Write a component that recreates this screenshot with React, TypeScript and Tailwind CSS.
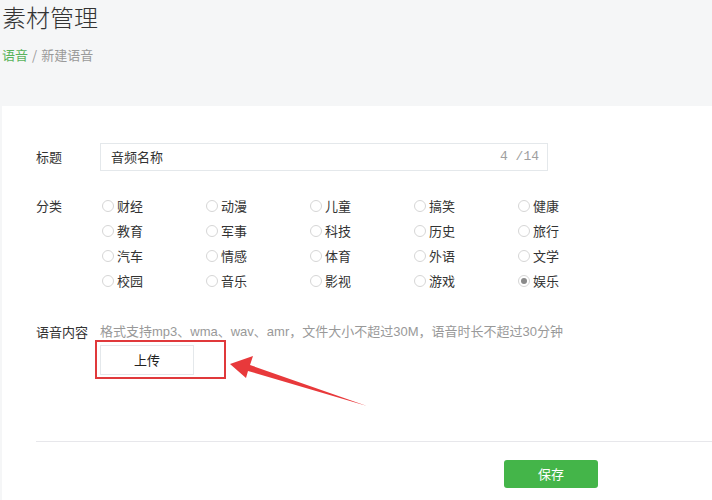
import React from "react";

const cats = [
  "财经", "动漫", "儿童", "搞笑", "健康",
  "教育", "军事", "科技", "历史", "旅行",
  "汽车", "情感", "体育", "外语", "文学",
  "校园", "音乐", "影视", "游戏", "娱乐",
];

export default function App() {
  return (
    <div
      className="relative w-[712px] h-[500px] overflow-hidden bg-[#f5f6f7] flex flex-col"
      style={{ fontFamily: '"Noto Sans CJK SC", "Liberation Sans", sans-serif' }}
    >
      <div className="pl-[2px] pt-[1px] h-[106px] shrink-0">
        <div className="text-[24px] leading-[32px] text-[#333] font-light">素材管理</div>
        <div className="mt-[12px] text-[13px] leading-[20px] text-[#9a9a9a]">
          <span className="text-[#59b35c]">语音</span>
          <span className="mx-[4px]">/</span>
          <span>新建语音</span>
        </div>
      </div>

      <div className="ml-[2px] flex-1 bg-white flex flex-col text-[13px] text-[#333]">
        <div className="pl-[34px] pt-[37px] flex items-center">
          <div className="w-[64px] leading-[28px]">标题</div>
          <div className="w-[448px] h-[28px] border border-[#e4e8eb] flex items-center justify-between pl-[10px] pr-[8px]">
            <span>音频名称</span>
            <span className="text-[#a0a0a0] text-[13px]" style={{ fontFamily: '"Liberation Mono", monospace' }}>4 /14</span>
          </div>
        </div>

        <div className="pl-[34px] mt-[22px] flex">
          <div className="w-[64px] leading-[25px]">分类</div>
          <div className="grid grid-cols-[104px_104px_104px_104px_104px]">
            {cats.map((c) => {
              const sel = c === "娱乐";
              return (
                <div key={c} className="h-[25px] flex items-center pl-[2px]">
                  <span className="w-[12px] h-[12px] rounded-full border border-[#d6d6d6] flex items-center justify-center mr-[3px]">
                    {sel && <span className="w-[6px] h-[6px] rounded-full bg-[#8a8a8a]" />}
                  </span>
                  <span>{c}</span>
                </div>
              );
            })}
          </div>
        </div>

        <div className="pl-[34px] mt-[27px] flex">
          <div className="w-[64px] leading-[24px]">语音内容</div>
          <div
            className="text-[#999] leading-[24px]"
            style={{ fontFamily: '"Liberation Sans", "Noto Sans CJK SC", sans-serif' }}
          >
            格式支持mp3、wma、wav、amr，文件大小不超过30M，语音时长不超过30分钟
          </div>
        </div>

        <div className="pl-[93px] mt-[-4px]">
          <div className="w-[131px] h-[39px] border-2 border-[#e0393b] flex items-center pl-[3px]">
            <div className="w-[94px] h-[30px] border border-[#e4e8eb] bg-white flex items-center justify-center text-[#222]">上传</div>
          </div>
        </div>

        <div className="ml-[34px] mt-[62px] h-px bg-[#e7e7eb]" />

        <div className="pl-[502px] mt-[18px]">
          <div className="w-[94px] h-[28px] rounded-[3px] bg-[#44b549] text-white text-[13px] flex items-center justify-center">保存</div>
        </div>
      </div>

      <svg className="absolute left-0 top-0 pointer-events-none" width="712" height="500">
        <polygon
          points="230,364 253,356 250,365 367,406 248,371 246,378"
          fill="#e8393b"
        />
      </svg>
    </div>
  );
}
